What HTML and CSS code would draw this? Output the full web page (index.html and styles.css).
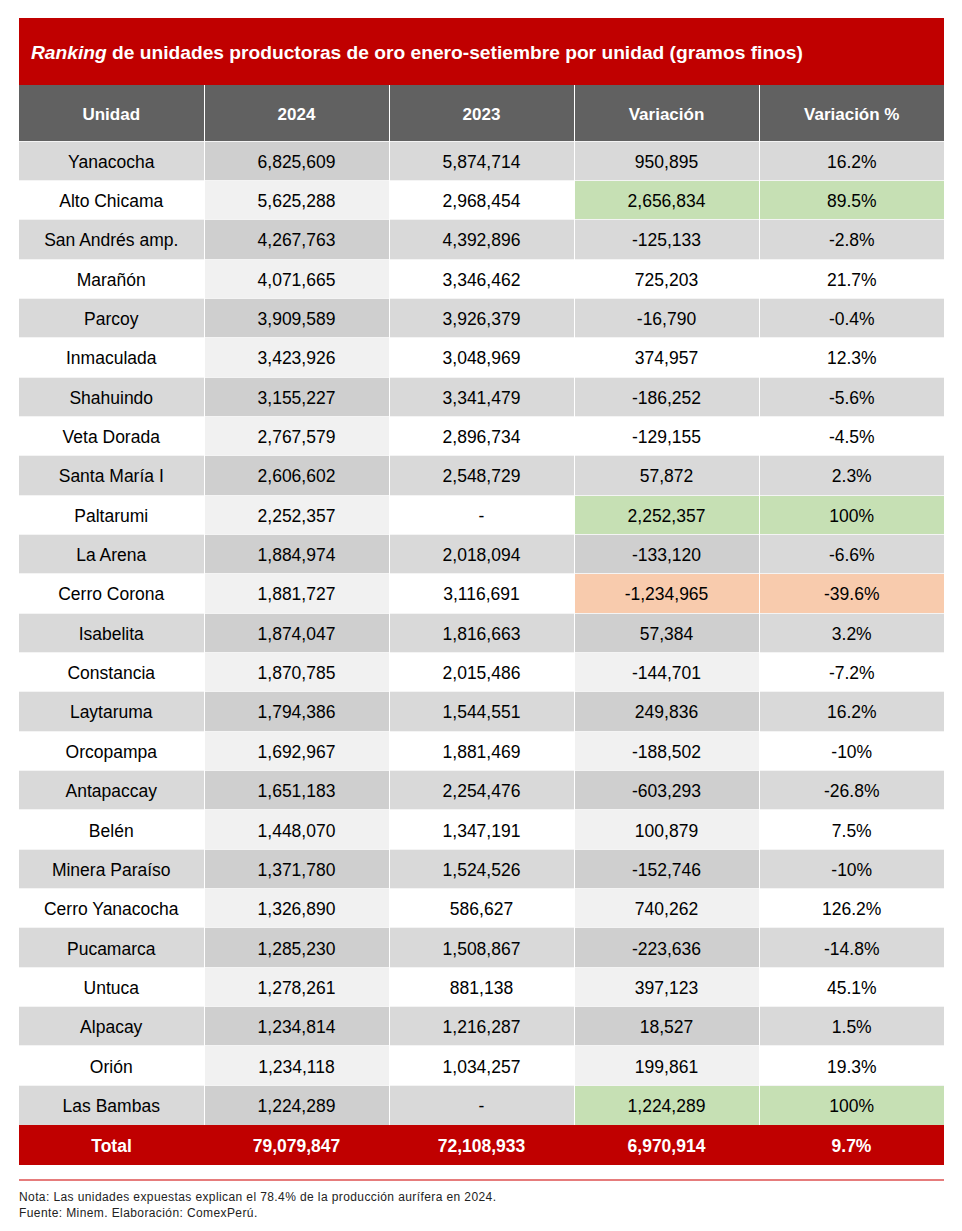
FILE: index.html
```html
<!DOCTYPE html>
<html lang="es">
<head>
<meta charset="utf-8">
<title>Ranking de unidades productoras de oro</title>
<link rel="stylesheet" href="styles.css">
</head>
<body>
<div class="card">
  <div class="title"><em>Ranking</em> de unidades productoras de oro enero-setiembre por unidad (gramos finos)</div>
  <table class="tbl">
    <thead>
      <tr><th>Unidad</th><th>2024</th><th>2023</th><th>Variación</th><th>Variación %</th></tr>
    </thead>
    <tbody>
      <tr class="odd"><td>Yanacocha</td><td class="hl">6,825,609</td><td>5,874,714</td><td>950,895</td><td>16.2%</td></tr>
      <tr class="even"><td>Alto Chicama</td><td class="hl">5,625,288</td><td>2,968,454</td><td class="green">2,656,834</td><td class="green">89.5%</td></tr>
      <tr class="odd"><td>San Andrés amp.</td><td class="hl">4,267,763</td><td>4,392,896</td><td>-125,133</td><td>-2.8%</td></tr>
      <tr class="even"><td>Marañón</td><td class="hl">4,071,665</td><td>3,346,462</td><td>725,203</td><td>21.7%</td></tr>
      <tr class="odd"><td>Parcoy</td><td class="hl">3,909,589</td><td>3,926,379</td><td>-16,790</td><td>-0.4%</td></tr>
      <tr class="even"><td>Inmaculada</td><td class="hl">3,423,926</td><td>3,048,969</td><td>374,957</td><td>12.3%</td></tr>
      <tr class="odd"><td>Shahuindo</td><td class="hl">3,155,227</td><td>3,341,479</td><td>-186,252</td><td>-5.6%</td></tr>
      <tr class="even"><td>Veta Dorada</td><td class="hl">2,767,579</td><td>2,896,734</td><td>-129,155</td><td>-4.5%</td></tr>
      <tr class="odd"><td>Santa María I</td><td class="hl">2,606,602</td><td>2,548,729</td><td>57,872</td><td>2.3%</td></tr>
      <tr class="even"><td>Paltarumi</td><td class="hl">2,252,357</td><td>-</td><td class="green">2,252,357</td><td class="green">100%</td></tr>
      <tr class="odd"><td>La Arena</td><td class="hl">1,884,974</td><td>2,018,094</td><td class="hl">-133,120</td><td>-6.6%</td></tr>
      <tr class="even"><td>Cerro Corona</td><td class="hl">1,881,727</td><td>3,116,691</td><td class="orange">-1,234,965</td><td class="orange">-39.6%</td></tr>
      <tr class="odd"><td>Isabelita</td><td class="hl">1,874,047</td><td>1,816,663</td><td class="hl">57,384</td><td>3.2%</td></tr>
      <tr class="even"><td>Constancia</td><td class="hl">1,870,785</td><td>2,015,486</td><td class="hl">-144,701</td><td>-7.2%</td></tr>
      <tr class="odd"><td>Laytaruma</td><td class="hl">1,794,386</td><td>1,544,551</td><td class="hl">249,836</td><td>16.2%</td></tr>
      <tr class="even"><td>Orcopampa</td><td class="hl">1,692,967</td><td>1,881,469</td><td class="hl">-188,502</td><td>-10%</td></tr>
      <tr class="odd"><td>Antapaccay</td><td class="hl">1,651,183</td><td>2,254,476</td><td class="hl">-603,293</td><td>-26.8%</td></tr>
      <tr class="even"><td>Belén</td><td class="hl">1,448,070</td><td>1,347,191</td><td class="hl">100,879</td><td>7.5%</td></tr>
      <tr class="odd"><td>Minera Paraíso</td><td class="hl">1,371,780</td><td>1,524,526</td><td class="hl">-152,746</td><td>-10%</td></tr>
      <tr class="even"><td>Cerro Yanacocha</td><td class="hl">1,326,890</td><td>586,627</td><td class="hl">740,262</td><td>126.2%</td></tr>
      <tr class="odd"><td>Pucamarca</td><td class="hl">1,285,230</td><td>1,508,867</td><td class="hl">-223,636</td><td>-14.8%</td></tr>
      <tr class="even"><td>Untuca</td><td class="hl">1,278,261</td><td>881,138</td><td class="hl">397,123</td><td>45.1%</td></tr>
      <tr class="odd"><td>Alpacay</td><td class="hl">1,234,814</td><td>1,216,287</td><td class="hl">18,527</td><td>1.5%</td></tr>
      <tr class="even"><td>Orión</td><td class="hl">1,234,118</td><td>1,034,257</td><td class="hl">199,861</td><td>19.3%</td></tr>
      <tr class="odd"><td>Las Bambas</td><td class="hl">1,224,289</td><td>-</td><td class="green">1,224,289</td><td class="green">100%</td></tr>
    </tbody>
    <tfoot>
      <tr><td>Total</td><td>79,079,847</td><td>72,108,933</td><td>6,970,914</td><td>9.7%</td></tr>
    </tfoot>
  </table>
  <div class="rule"></div>
  <div class="notes">
    <p>Nota: Las unidades expuestas explican el 78.4% de la producción aurífera en 2024.</p>
    <p>Fuente: Minem. Elaboración: ComexPerú.</p>
  </div>
</div>
</body>
</html>
```

FILE: styles.css
```css
* { box-sizing: border-box; }
html, body { margin: 0; padding: 0; background: #ffffff; }
body {
  font-family: "Liberation Sans", Arial, sans-serif;
  color: #000;
  padding: 18px 18px 0 19px;
}
.card { width: 925px; }
.title {
  background: #c00000;
  color: #fff;
  font-weight: bold;
  font-size: 19.2px;
  height: 67px;
  line-height: 22px;
  padding: 24px 12px 0 12px;
  white-space: nowrap;
}
.title em { font-style: italic; }
.tbl {
  width: 925px;
  border-collapse: collapse;
  table-layout: fixed;
  font-size: 17.5px;
}
.tbl th, .tbl td {
  text-align: center;
  vertical-align: middle;
  padding: 3px 0 0 0;
  border-left: 1.5px solid #fff;
  border-top: 1px solid #f4f4f4;
}
.tbl th:first-child, .tbl td:first-child { border-left: none; }
.tbl thead th {
  background: #616161;
  color: #fff;
  font-weight: bold;
  font-size: 17px;
  height: 56px;
  padding-top: 4px;
  border-top: none;
}
.tbl tbody td { height: 39.35px; }
.tbl tbody tr.odd td { background: #d9d9d9; }
.tbl tbody tr.even td { background: #ffffff; }
.tbl tbody tr.odd td.hl { background: #cfcfcf; }
.tbl tbody tr.even td.hl { background: #f1f1f1; }
.tbl tbody tr td.green { background: #c6e0b4; }
.tbl tbody tr td.orange { background: #f8cbad; }
.tbl tfoot td {
  background: #c00000;
  color: #fff;
  font-weight: bold;
  font-size: 17.5px;
  height: 40px;
  padding-top: 3px;
  border-left: none;
  border-top: none;
}
.rule {
  margin-top: 14px;
  height: 2px;
  background: #e67c7c;
}
.notes {
  margin-top: 8px;
  font-size: 12px;
  color: #222;
  line-height: 16px;
  letter-spacing: 0.4px;
}
.notes p { margin: 0; }
```
